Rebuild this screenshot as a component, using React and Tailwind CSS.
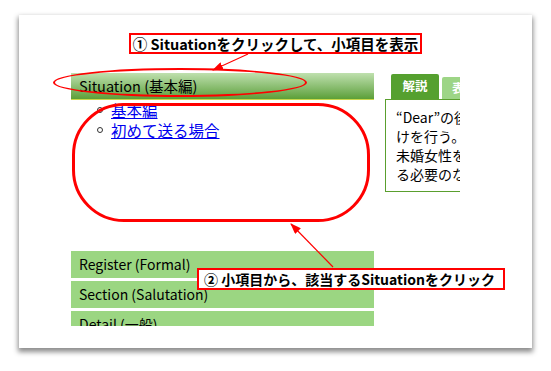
export default function App() {
  const jp = "font-['Noto_Sans_CJK_JP','Noto_Sans',sans-serif]";
  const lightBars = ["Register (Formal)", "Section (Salutation)", "Detail (一般)"];
  const panelLines = ["“Dear”の後にコンマ", "けを行う。", "未婚女性を指す場合", "る必要のない場合"];

  return (
    <div className={`relative w-[551px] h-[371px] overflow-hidden bg-white ${jp}`}>
      {/* screenshot card */}
      <div className="ml-[19px] mt-[15px] w-[513px] h-[333px] bg-white shadow-[0_3px_5px_1px_rgba(0,0,0,0.45)] flex pt-[58px] pl-[52px]">
        {/* left menu */}
        <div className="w-[303px] h-[253px] overflow-hidden flex flex-col">
          <div className="h-[27px] shrink-0 bg-gradient-to-b from-[#bfe0ae] to-[#5c9f37] border-b border-[#c9d84a] flex items-center pl-[8px] text-[14.5px] text-black">
            Situation (基本編)
          </div>
          <ul className="pl-[26px] text-[15.5px] leading-[20px]">
            {["基本編", "初めて送る場合"].map((t) => (
              <li key={t} className="flex items-center gap-[8px]">
                <span className="w-[6px] h-[6px] rounded-full border border-[#333] shrink-0" />
                <a href="#" className="text-[#0000ee] underline">{t}</a>
              </li>
            ))}
          </ul>
          <div className="mt-[111px] flex flex-col gap-[3px]">
            {lightBars.map((t) => (
              <div key={t} className="h-[27px] shrink-0 bg-[#9bd682] flex items-center pl-[8px] text-[14px] text-black">
                {t}
              </div>
            ))}
          </div>
        </div>

        {/* right panel */}
        <div className="ml-[11px] w-[75px] overflow-hidden mt-px">
          <div className="flex items-end gap-[3px] pl-[6px] h-[25px]">
            <div className="w-[48px] h-[25px] shrink-0 bg-[#55a02f] rounded-t-[2px] flex items-center justify-center text-white font-bold text-[12.5px]">
              解説
            </div>
            <div className="w-[48px] h-[22px] shrink-0 bg-[#9dd586] rounded-t-[2px] flex items-center pl-[10px] text-white font-bold text-[12.5px] whitespace-nowrap">
              表現例
            </div>
          </div>
          <div className="w-[120px] h-[93px] border border-[#5a9f2e] pt-[8px] pl-[10px] text-[14px] leading-[19px] text-black">
            {panelLines.map((l) => (
              <div key={l} className="whitespace-nowrap">{l}</div>
            ))}
          </div>
        </div>
      </div>

      {/* annotations */}
      <div className="absolute left-[53px] top-[68px] w-[254px] h-[29px] border-2 border-[#ff0000] rounded-[50%]" />
      <div className="absolute left-[72px] top-[103px] w-[298px] h-[119px] border-[3px] border-[#ff0000] rounded-[52px]" />

      <svg className="absolute left-0 top-0" width="551" height="371">
        <defs>
          <marker id="ah" markerUnits="userSpaceOnUse" markerWidth="11" markerHeight="8" refX="10" refY="4" orient="auto">
            <path d="M0,0 L11,4 L0,8 z" fill="#ff0000" />
          </marker>
        </defs>
        <line x1="248" y1="54" x2="213" y2="70" stroke="#ff0000" strokeWidth="1.2" markerEnd="url(#ah)" />
        <line x1="333" y1="267" x2="291" y2="224" stroke="#ff0000" strokeWidth="1.2" markerEnd="url(#ah)" />
      </svg>

      <div className="absolute left-[129px] top-[33px] w-[293px] h-[21px] border-2 border-[#ff0000] bg-white flex items-center justify-center font-bold text-[14.5px] text-black whitespace-nowrap">
        ① Situationをクリックして、小項目を表示
      </div>
      <div className="absolute left-[197px] top-[268px] w-[308px] h-[22px] border-2 border-[#ff0000] bg-white flex items-center pl-[5px] font-bold text-[14px] text-black whitespace-nowrap">
        ② 小項目から、該当するSituationをクリック
      </div>
    </div>
  );
}
